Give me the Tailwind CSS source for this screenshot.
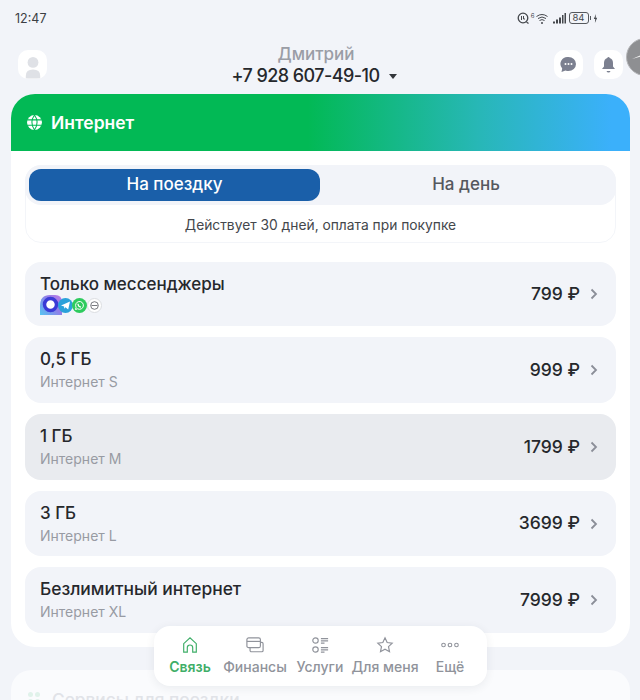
<!DOCTYPE html>
<html lang="ru">
<head>
    <meta charset="UTF-8">
    <meta name="viewport" content="width=device-width, initial-scale=1.0">
    <title>Интернет</title>
    <script src="https://cdn.jsdelivr.net/npm/@tailwindcss/browser@4"></script>
</head>
<body class="bg-[#f2f4f9] text-[#26282c] font-['Inter',sans-serif]">
<div class="relative h-[700px] w-[640px] overflow-hidden">
    <!-- Статус бар -->
    <div class="flex h-[38px] items-start justify-between pl-[15px] pr-[42px] pt-[11px]">
        <span class="text-[12.5px] leading-[16px] text-[#3c3f44]">12:47</span>
        <div class="flex h-[14px] items-center text-[#44474c]">
            <svg class="h-[13px] w-[13px]" viewBox="0 0 13 13" fill="none" stroke="currentColor"><circle cx="6" cy="6" r="4.800" stroke-width="1.300"/><path d="M4.500 4v4M6.500 4v3H8" stroke-width="1"/><path d="M9.500 10l2 1.500" stroke-width="1.200"/></svg>
            <span class="ml-[1px] -mt-[5px] text-[6px] leading-none">6</span>
            <svg class="ml-[1px] h-[11px] w-[12px]" viewBox="0 0 12 11" fill="none" stroke="currentColor" stroke-width="1"><path d="M.5 3.500q5.500-4 11 0M2 5.500q4-3 8 0M3.500 7.500q2.500-1.800 5 0"/><path d="M5 10h2" stroke-width="1.300"/></svg>
            <svg class="ml-[5px] h-[11px] w-[13px]" viewBox="0 0 13 11" fill="currentColor"><rect x="0" y="8.500" width="2" height="2"/><rect x="3" y="6.500" width="2" height="4"/><rect x="6" y="4.500" width="2" height="6"/><rect x="9" y="2" width="1.500" height="8.500"/><rect x="11.500" y="0" width="1.500" height="10.500"/></svg>
            <span class="ml-[3px] flex h-[12px] w-[20px] items-center justify-center rounded-[3px] border border-[#55585d] text-[9.500px] leading-none">84</span>
            <span class="ml-[1px] h-[4px] w-[1.500px] bg-[#55585d]"></span>
            <svg class="ml-[2px] h-[11px] w-[5px]" viewBox="0 0 6 11" fill="currentColor"><path d="M3.500 0L1 6h1.700L2.300 11 5 4.500H3.200z"/></svg>
        </div>
    </div>

    <!-- Шапка -->
    <div class="flex h-[56px] items-start justify-between pl-[18px] pr-[17px]">
        <div class="mt-[12px] flex h-[29px] w-[29px] items-end justify-center overflow-hidden rounded-[10px] bg-white">
            <svg class="h-[26px] w-[18px]" viewBox="0 0 20 28" fill="#dfe1e6"><circle cx="10" cy="10" r="6"/><path d="M2 28v-3q0-7 8-7t8 7v3z"/></svg>
        </div>
        <div class="ml-[27px] flex flex-col items-center pt-[6px]">
            <span class="ml-[4px] text-[17px] leading-[20px] font-medium text-[#9a9da6]">Дмитрий</span>
            <div class="flex items-center">
                <span class="text-[18px] leading-[24px] font-medium tracking-[-0.55px] text-[#26282c]">+7 928 607-49-10</span>
                <span class="ml-[9px] h-0 w-0 border-x-[4px] border-t-[5px] border-x-transparent border-t-[#33363b]"></span>
            </div>
        </div>
        <div class="mt-[12px] flex gap-[11px]">
            <div class="flex h-[29px] w-[29px] items-center justify-center rounded-[10px] bg-white">
                <svg class="h-[17px] w-[17px]" viewBox="0 0 17 17"><path fill="#7c8090" d="M8.500 1a7.500 7 0 0 1 0 14q-1.500 0-3-.5L1.500 16l.7-3.500A7 7 0 0 1 8.500 1z"/><circle cx="5.500" cy="8" r="1" fill="#fff"/><circle cx="8.500" cy="8" r="1" fill="#fff"/><circle cx="11.500" cy="8" r="1" fill="#fff"/></svg>
            </div>
            <div class="flex h-[29px] w-[29px] items-center justify-center rounded-[10px] bg-white">
                <svg class="h-[17px] w-[15px]" viewBox="0 0 15 17" fill="#7c8090"><path d="M7.500 1q1 0 1.200 1 3.300 1 3.300 5v3.500l2 2.500H1l2-2.500V7q0-4 3.300-5 .2-1 1.200-1z"/><path d="M5.500 15h4q-.5 1.500-2 1.500t-2-1.500z"/></svg>
            </div>
        </div>
    </div>

    <!-- Плавающая кнопка -->
    <div class="absolute left-[626px] top-[38px] h-[38px] w-[38px] rounded-full border border-[#b5b6b9] bg-[#8e8f92]">
        <svg class="h-[36px] w-[14px]" viewBox="0 0 14 36"><path d="M5 20l9-4v1.500z" fill="#f4f4f4"/></svg>
    </div>

    <!-- Карточка -->
    <div class="ml-[11px] h-[553px] w-[619px] overflow-hidden rounded-[24px] bg-white">
        <div class="flex h-[57px] items-center bg-[linear-gradient(90deg,#02b955_0%,#02b955_48%,#28b7b8_76%,#3bb0fb_97%)] pl-[15px]">
            <svg class="h-[17px] w-[17px]" viewBox="0 0 16 16" fill="none" stroke="#fff" stroke-width="1.500"><circle cx="8" cy="8" r="7" fill="#fff" stroke="none"/><path stroke="#02b955" stroke-width="1" d="M1 5.500h14M1 10.500h14M8 1q-5 7 0 14M8 1q5 7 0 14"/></svg>
            <span class="ml-[8px] mt-[1px] text-[17.500px] font-semibold text-white">Интернет</span>
        </div>
        <div class="px-[14px] pt-[14px]">
            <!-- Переключатель -->
            <div class="h-[78px] rounded-[16px] border border-[#f3f5f9]">
                <div class="-m-px flex h-[40px] rounded-[16px] bg-[#f2f4f9] p-[4px]">
                    <div class="flex h-[32px] w-[291px] items-center justify-center rounded-[12px] bg-[#1a5fa9] text-[17px] font-medium text-white">На поездку</div>
                    <div class="flex flex-1 items-center justify-center text-[17px] font-medium text-[#55585e]">На день</div>
                </div>
                <p class="mt-[12px] text-center text-[13.800px] leading-[18px] text-[#44474c]">Действует 30 дней, оплата при покупке</p>
            </div>

            <!-- Тарифы -->
            <div class="mt-[19px] flex flex-col gap-[11px]">
                <div class="flex h-[64px] items-center justify-between rounded-[16px] bg-[#f2f4f9] pl-[15px] pr-[18px]">
                    <div class="flex flex-col">
                        <span class="text-[17px] leading-[22px] font-medium">Только мессенджеры</span>
                        <div class="flex h-[20px] items-center">
                            <svg class="h-[20px] w-[22px]" viewBox="0 0 22 20">
                                <defs>
                                    <linearGradient id="tile" x1="0" y1="1" x2="1" y2="0.2">
                                        <stop offset="0" stop-color="#55c6f2"/>
                                        <stop offset="0.6" stop-color="#8f7fe8"/>
                                        <stop offset="1" stop-color="#b57ae6"/>
                                    </linearGradient>
                                </defs>
                                <path fill="url(#tile)" d="M0 20v-9Q0 0 10 0h5q7 0 7 7v13z"/>
                                <circle cx="10.500" cy="9.500" r="6" fill="#fff" stroke="#3a3ad6" stroke-width="3.500"/>
                            </svg>
                            <span class="-ml-[4px] flex h-[15px] w-[15px] items-center justify-center rounded-full bg-[#2aa1da]">
                                <svg class="h-[9px] w-[9px]" viewBox="0 0 10 10" fill="#fff"><path d="M0 5l10-4.500-2 9-3-2.500-1.500 1.500V6z"/></svg>
                            </span>
                            <span class="-ml-px flex h-[15px] w-[15px] items-center justify-center rounded-full bg-[#2ecb5e]">
                                <svg class="h-[11px] w-[11px]" viewBox="0 0 11 11" fill="none" stroke="#fff" stroke-width="1"><path d="M1.500 9.500l.6-2.200a3.900 3.900 0 1 1 1.500 1.500z"/><path d="M4 3.800q0 3 3 3.400" stroke-width="1.200"/></svg>
                            </span>
                            <span class="flex h-[15px] w-[15px] items-center justify-center rounded-full border border-[#dcdee2] bg-white">
                                <svg class="h-[9px] w-[9px]" viewBox="0 0 9 9" fill="none" stroke="#55585e" stroke-width=".8"><circle cx="4.500" cy="4.500" r="3.800"/><path d="M1.500 4.500h6"/></svg>
                            </span>
                        </div>
                    </div>
                    <div class="flex items-center">
                        <span class="text-[17.500px] font-medium">799 ₽</span>
                        <svg class="ml-[10px] h-[12px] w-[8px]" viewBox="0 0 8 12" fill="none" stroke="#8b8e98" stroke-width="1.800"><path d="M1.500 1.500L6 6l-4.500 4.500"/></svg>
                    </div>
                </div>

                <div class="flex h-[66px] items-center justify-between rounded-[16px] bg-[#f2f4f9] pl-[15px] pr-[18px]">
                    <div class="flex flex-col">
                        <span class="text-[17px] leading-[22px] font-medium">0,5 ГБ</span>
                        <span class="mt-[2px] text-[14px] leading-[20px] text-[#989ba3]">Интернет S</span>
                    </div>
                    <div class="flex items-center">
                        <span class="text-[17.500px] font-medium">999 ₽</span>
                        <svg class="ml-[10px] h-[12px] w-[8px]" viewBox="0 0 8 12" fill="none" stroke="#8b8e98" stroke-width="1.800"><path d="M1.500 1.500L6 6l-4.500 4.500"/></svg>
                    </div>
                </div>

                <div class="flex h-[66px] items-center justify-between rounded-[16px] bg-[#e9ebef] pl-[15px] pr-[18px]">
                    <div class="flex flex-col">
                        <span class="text-[17px] leading-[22px] font-medium">1 ГБ</span>
                        <span class="mt-[2px] text-[14px] leading-[20px] text-[#989ba3]">Интернет M</span>
                    </div>
                    <div class="flex items-center">
                        <span class="text-[17.500px] font-medium">1799 ₽</span>
                        <svg class="ml-[10px] h-[12px] w-[8px]" viewBox="0 0 8 12" fill="none" stroke="#8b8e98" stroke-width="1.800"><path d="M1.500 1.500L6 6l-4.500 4.500"/></svg>
                    </div>
                </div>

                <div class="flex h-[65px] items-center justify-between rounded-[16px] bg-[#f2f4f9] pl-[15px] pr-[18px]">
                    <div class="flex flex-col">
                        <span class="text-[17px] leading-[22px] font-medium">3 ГБ</span>
                        <span class="mt-[2px] text-[14px] leading-[20px] text-[#989ba3]">Интернет L</span>
                    </div>
                    <div class="flex items-center">
                        <span class="text-[17.500px] font-medium">3699 ₽</span>
                        <svg class="ml-[10px] h-[12px] w-[8px]" viewBox="0 0 8 12" fill="none" stroke="#8b8e98" stroke-width="1.800"><path d="M1.500 1.500L6 6l-4.500 4.500"/></svg>
                    </div>
                </div>

                <div class="flex h-[66px] items-center justify-between rounded-[16px] bg-[#f2f4f9] pl-[15px] pr-[18px]">
                    <div class="flex flex-col">
                        <span class="text-[17.400px] leading-[22px] font-medium">Безлимитный интернет</span>
                        <span class="mt-[2px] text-[14px] leading-[20px] text-[#989ba3]">Интернет XL</span>
                    </div>
                    <div class="flex items-center">
                        <span class="text-[17.500px] font-medium">7999 ₽</span>
                        <svg class="ml-[10px] h-[12px] w-[8px]" viewBox="0 0 8 12" fill="none" stroke="#8b8e98" stroke-width="1.800"><path d="M1.500 1.500L6 6l-4.500 4.500"/></svg>
                    </div>
                </div>
            </div>
        </div>
    </div>

    <!-- Следующая секция под затемнением -->
    <div class="mt-[23px] ml-[11px] flex h-[60px] w-[619px] items-start rounded-[20px] bg-white/60 pl-[17px] pt-[19px]">
        <span class="mt-[3px] grid h-[12px] w-[12px] grid-cols-2 gap-[2px]">
            <span class="rounded-full bg-[#e0f2ea]"></span><span class="rounded-full bg-[#e0f2ea]"></span>
            <span class="rounded-full bg-[#e0f2ea]"></span><span class="rounded-full bg-[#e0f2ea]"></span>
        </span>
        <span class="ml-[12px] text-[17.300px] leading-[22px] font-medium text-[#e1e3e8]">Сервисы для поездки</span>
    </div>

    <!-- Нижнее меню -->
    <div class="absolute left-[154px] top-[626px] grid h-[60px] w-[333px] grid-cols-[repeat(5,65px)] rounded-[16px] bg-white pl-[3.500px] pt-[10px] shadow-[0_2px_10px_rgba(40,50,70,0.08)]">
        <div class="flex flex-col items-center whitespace-nowrap">
            <svg class="h-[18px] w-[18px]" viewBox="0 0 20 20" fill="none" stroke="#3fae68" stroke-width="1.300"><path d="M3 18V8.500L10 2l7 6.500V18h-4v-5a3 3 0 0 0-6 0v5z"/></svg>
            <span class="mt-[4px] text-[14px] leading-[18px] font-semibold text-[#3fae68]">Связь</span>
        </div>
        <div class="flex flex-col items-center whitespace-nowrap">
            <svg class="h-[18px] w-[18px]" viewBox="0 0 20 20" fill="none" stroke="#90939b" stroke-width="1.300"><rect x="1" y="2" width="15" height="11" rx="2"/><path d="M1 6h15"/><path d="M16 7h1.500A1.500 1.500 0 0 1 19 8.500V16a1.500 1.500 0 0 1-1.500 1.500H6A1.500 1.500 0 0 1 4.500 16v-3"/></svg>
            <span class="mt-[4px] text-[14px] leading-[18px] font-medium text-[#90939b]">Финансы</span>
        </div>
        <div class="flex flex-col items-center whitespace-nowrap">
            <svg class="h-[18px] w-[18px]" viewBox="0 0 20 20" fill="none" stroke="#90939b" stroke-width="1.300"><circle cx="5" cy="5" r="3"/><circle cx="5" cy="15" r="3"/><path d="M11 3h8M11 5.500h8M11 8h4M11 13h8M11 15.500h8M11 18h4"/></svg>
            <span class="mt-[4px] text-[14px] leading-[18px] font-medium text-[#90939b]">Услуги</span>
        </div>
        <div class="flex flex-col items-center whitespace-nowrap">
            <svg class="h-[18px] w-[18px]" viewBox="0 0 20 20" fill="none" stroke="#90939b" stroke-width="1.300"><path d="M10 2l2.400 5.200 5.600.7-4.100 3.900 1.100 5.600-5-2.800-5 2.800 1.100-5.600L2 7.900l5.600-.7z"/></svg>
            <span class="mt-[4px] text-[14px] leading-[18px] font-medium text-[#90939b]">Для меня</span>
        </div>
        <div class="flex flex-col items-center whitespace-nowrap">
            <svg class="h-[18px] w-[18px]" viewBox="0 0 20 20" fill="none" stroke="#90939b" stroke-width="1.200"><circle cx="2.800" cy="10" r="2"/><circle cx="10" cy="10" r="2"/><circle cx="17.200" cy="10" r="2"/></svg>
            <span class="mt-[4px] text-[14px] leading-[18px] font-medium text-[#90939b]">Ещё</span>
        </div>
    </div>
</div>
</body>
</html>
